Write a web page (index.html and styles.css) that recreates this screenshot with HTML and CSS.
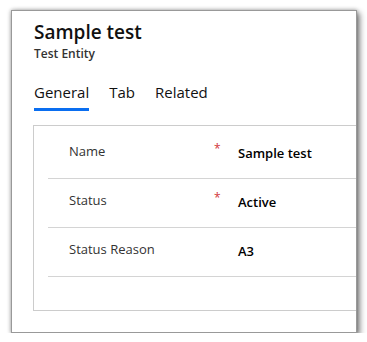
FILE: index.html
```html
<!DOCTYPE html>
<html lang="en">
<head>
    <meta charset="UTF-8">
    <title>Sample test</title>
    <link rel="stylesheet" href="styles.css">
</head>
<body>
    <div class="window">
        <div class="header">
            <h1 class="title">Sample test</h1>
            <div class="entity">Test Entity</div>
        </div>
        <div class="tabs">
            <span class="tab active">General</span>
            <span class="tab">Tab</span>
            <span class="tab">Related</span>
        </div>
        <div class="section">
            <div class="row">
                <span class="label">Name</span>
                <span class="req">*</span>
                <span class="value">Sample test</span>
            </div>
            <div class="row">
                <span class="label">Status</span>
                <span class="req">*</span>
                <span class="value">Active</span>
            </div>
            <div class="row">
                <span class="label">Status Reason</span>
                <span class="req"></span>
                <span class="value">A3</span>
            </div>
        </div>
    </div>
</body>
</html>
```

FILE: styles.css
```css
html, body
{
    margin: 0;
    padding: 0;
}
body
{
    background: #fff;
    font-family: 'Segoe UI', 'Open Sans', sans-serif;
    color: #000;
}
.window
{
    margin: 10px 0 0 11px;
    width: 344px;
    height: 321px;
    border: 1px solid #999;
    background: #fff;
    box-shadow: 0 0 4px rgba(0, 0, 0, 0.35), 3px 3px 6px rgba(0, 0, 0, 0.45);
    overflow: hidden;
}
.header
{
    padding: 8px 0 0 22px;
}
.title
{
    margin: 0;
    font-size: 19px;
    font-weight: 600;
    line-height: 26px;
    color: #111;
}
.entity
{
    font-size: 12px;
    font-weight: 600;
    line-height: 17px;
    color: #333;
}
.tabs
{
    display: flex;
    gap: 20px;
    padding: 20px 0 0 22px;
}
.tab
{
    font-size: 15px;
    line-height: 20px;
    padding-bottom: 6px;
    color: #111;
    border-bottom: 3px solid transparent;
}
.tab.active
{
    border-bottom-color: #0a6ef0;
}
.section
{
    margin: 14px 0 0 21px;
    width: 400px;
    border: 1px solid #ccc;
    padding: 4px 0 33px 0;
}
.row
{
    display: flex;
    align-items: center;
    height: 48px;
    margin-left: 14px;
    border-bottom: 1px solid #d4d4d4;
}
.label
{
    width: 145px;
    padding-left: 21px;
    font-size: 13px;
    color: #333;
    margin-top: -7px;
}
.req
{
    width: 24px;
    color: #d13438;
    font-size: 12px;
    margin-top: -12px;
}
.value
{
    font-size: 13px;
    font-weight: 600;
    color: #000;
    margin-top: -2px;
}
```
